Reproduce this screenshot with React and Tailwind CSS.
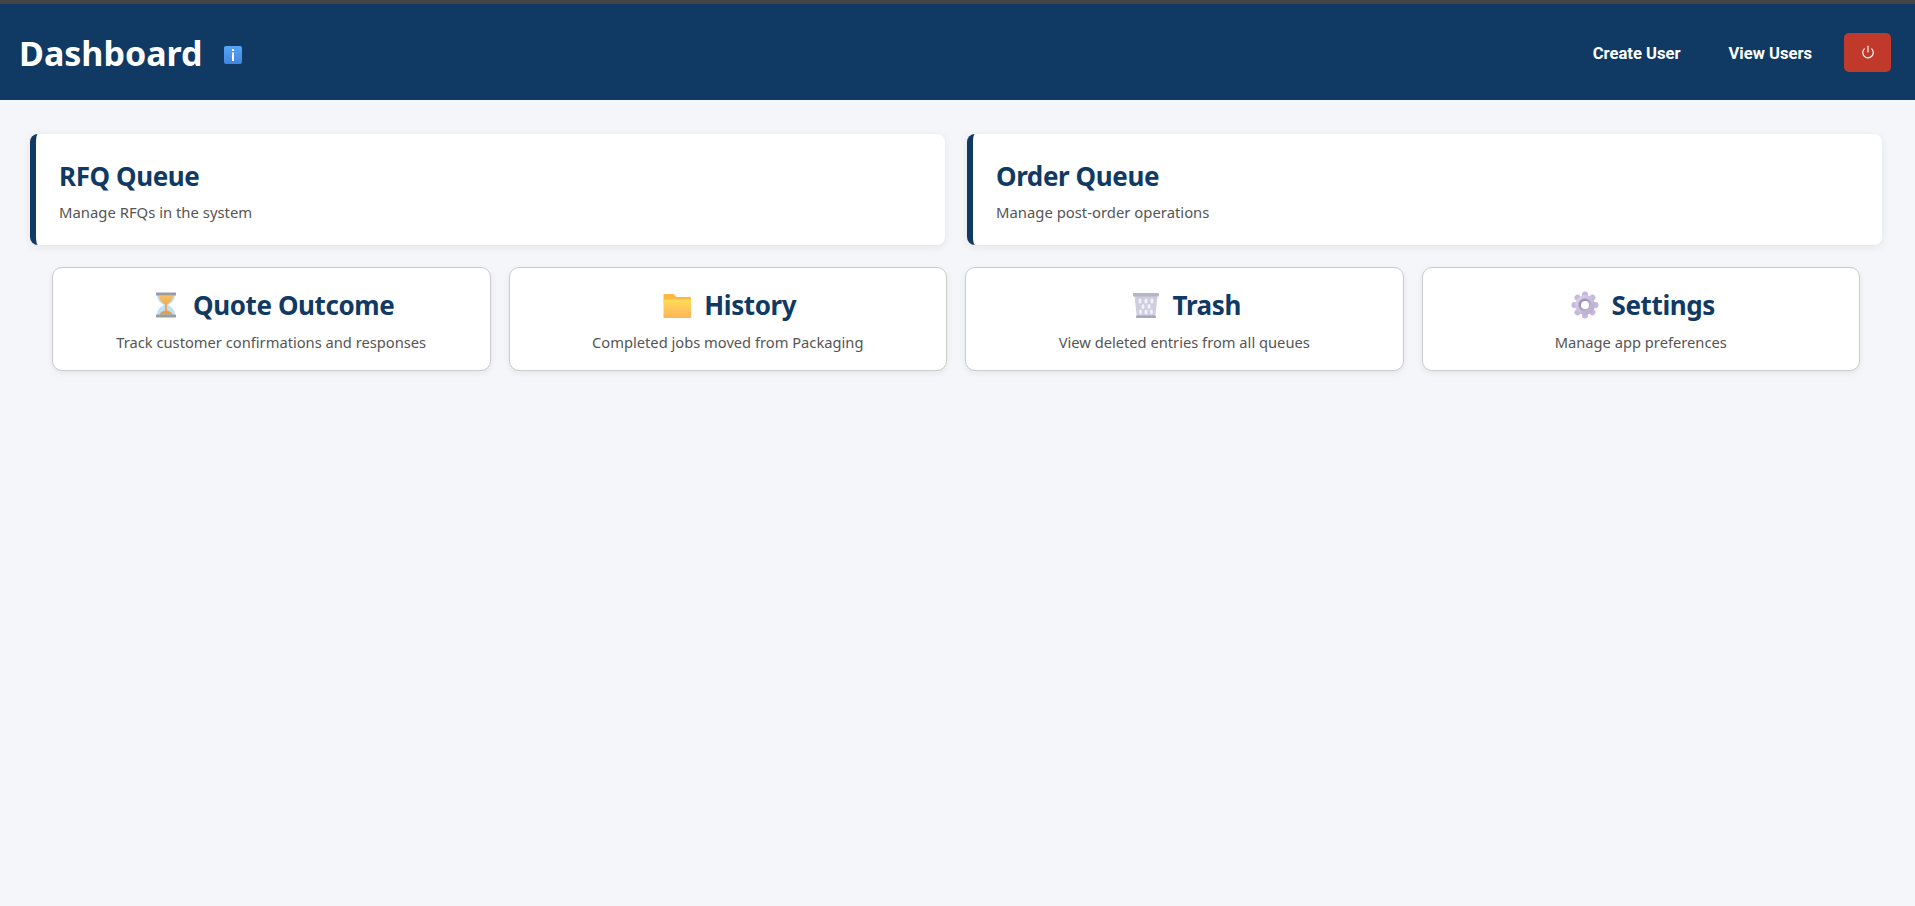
import React from 'react';
import { Power } from 'lucide-react';

function Hourglass() {
  return (
    <svg width="28" height="28" viewBox="0 0 28 28">
      <defs>
        <linearGradient id="hgSand" x1="0" y1="0" x2="0" y2="1">
          <stop offset="0" stopColor="#f6c063" />
          <stop offset="1" stopColor="#e29a45" />
        </linearGradient>
      </defs>
      <path d="M5 4h18c0 6-4 8-7 10 3 2 7 4 7 10H5c0-6 4-8 7-10-3-2-7-4-7-10z" fill="#bfe0f5" />
      <path d="M7 5h14c-.4 4.500-3.200 6.500-6 8.500v6c2.200.6 4.900 2 5.400 4H7.600c.5-2 3.200-3.400 5.400-4v-6C10.200 11.500 7.400 9.500 7 5z" fill="url(#hgSand)" />
      <rect x="4" y="1.500" width="20" height="3" rx="0.500" fill="#9b9ba3" />
      <rect x="4" y="23.500" width="20" height="3" rx="0.500" fill="#9b9ba3" />
    </svg>
  );
}

function Folder() {
  return (
    <svg width="28" height="28" viewBox="0 0 28 28">
      <defs>
        <linearGradient id="fldBody" x1="0" y1="0" x2="0" y2="1">
          <stop offset="0" stopColor="#ffdc55" />
          <stop offset="1" stopColor="#ffb45c" />
        </linearGradient>
      </defs>
      <path d="M0.500 4a1 1 0 0 1 1-1h8c1 0 1.500.5 2.200 1.200L13.500 6H27a1 1 0 0 1 1 1v5H0.500z" fill="#fdb93f" />
      <path d="M0.500 8.500h27.500v17.500a1 1 0 0 1-1 1H1.500a1 1 0 0 1-1-1z" fill="url(#fldBody)" />
    </svg>
  );
}

function Basket() {
  return (
    <svg width="28" height="28" viewBox="0 0 28 28">
      <path d="M2.500 5h23l-2.400 21.500H4.900z" fill="#cfcde0" />
      <g fill="#f4f3f9">
        <ellipse cx="8" cy="10" rx="1.500" ry="2.600" />
        <ellipse cx="14" cy="10" rx="1.500" ry="2.600" />
        <ellipse cx="20" cy="10" rx="1.500" ry="2.600" />
        <ellipse cx="11" cy="15.500" rx="1.500" ry="2.600" />
        <ellipse cx="17" cy="15.500" rx="1.500" ry="2.600" />
        <ellipse cx="8.500" cy="21" rx="1.400" ry="2.400" />
        <ellipse cx="14" cy="21" rx="1.500" ry="2.600" />
        <ellipse cx="19.500" cy="21" rx="1.400" ry="2.400" />
      </g>
      <rect x="1" y="2" width="26" height="3.500" rx="1" fill="#b6b4c6" />
      <rect x="4" y="24.500" width="20" height="2.500" rx="1" fill="#a9a6bd" />
    </svg>
  );
}

function Gear() {
  const angles = [0, 45, 90, 135, 180, 225, 270, 315];
  return (
    <svg width="28" height="28" viewBox="0 0 28 28">
      <defs>
        <linearGradient id="gearRing" x1="0" y1="0" x2="1" y2="1">
          <stop offset="0" stopColor="#e0d8ee" />
          <stop offset="1" stopColor="#b3a4cf" />
        </linearGradient>
        <linearGradient id="gearHole" x1="0" y1="0" x2="1" y2="1">
          <stop offset="0" stopColor="#8c84a8" />
          <stop offset="1" stopColor="#c7c0d8" />
        </linearGradient>
      </defs>
      {angles.map((a) => (
        <circle key={a} cx="14" cy="3.500" r="3" fill="#c5b8de" transform={`rotate(${a} 14 14)`} />
      ))}
      <circle cx="14" cy="14" r="10" fill="url(#gearRing)" />
      <circle cx="14" cy="14" r="6.500" fill="url(#gearHole)" />
      <circle cx="14" cy="14" r="4" fill="#ffffff" />
    </svg>
  );
}

function QueueCard({ title, text }) {
  return (
    <div className="h-[111px] bg-white rounded-lg border-l-[6px] border-[#103a63] pl-[23px] pt-[24px] shadow-[0_2px_8px_rgba(0,0,0,0.08)]">
      <h2 className="text-[26px] leading-[36px] font-bold text-[#103a63] tracking-[-0.4px]">{title}</h2>
      <p className="mt-[8px] text-[14.850px] leading-[20px] text-[#555555]">{text}</p>
    </div>
  );
}

function ToolCard({ icon, title, text }) {
  return (
    <div className="h-[104px] bg-white rounded-[10px] border border-[#cccccc] pt-[19px] flex flex-col items-center shadow-[0_2px_6px_rgba(0,0,0,0.07)]">
      <div className="flex items-center gap-[13px] h-[36px] pl-[4px]">
        {icon}
        <h3 className="text-[26px] leading-[36px] font-bold text-[#103a63] tracking-[-0.4px]">{title}</h3>
      </div>
      <p className="mt-[9px] text-[14.700px] leading-[20px] text-[#555555]">{text}</p>
    </div>
  );
}

export default function App() {
  return (
    <div className="min-h-[906px] bg-[#f5f6fa] font-['Noto_Sans',sans-serif]">
      <header className="h-[100px] border-t-4 border-[#454545] bg-[#103a63] flex items-center justify-between pl-[19px] pr-6">
        <div className="flex items-center pt-[2px]">
          <h1 className="text-[34px] leading-[48px] font-bold text-white">Dashboard</h1>
          <svg className="ml-[21px] mt-[4px]" width="18" height="18" viewBox="0 0 18 18">
            <defs>
              <linearGradient id="infoBg" x1="0" y1="0" x2="0" y2="1">
                <stop offset="0" stopColor="#58a5f5" />
                <stop offset="1" stopColor="#3f85e0" />
              </linearGradient>
            </defs>
            <rect width="18" height="18" rx="2" fill="url(#infoBg)" />
            <rect x="8" y="3" width="2" height="2" fill="#ffffff" />
            <rect x="8" y="6.500" width="2" height="8.500" fill="#ffffff" />
          </svg>
        </div>
        <nav className="flex items-center font-['Roboto',sans-serif] text-[16.600px] font-bold text-white">
          <span className="pt-[4px]">Create User</span>
          <span className="ml-[48px] pt-[4px]">View Users</span>
          <button className="ml-[32px] w-[47px] h-[39px] rounded-[5px] bg-[#c0392b] flex items-center justify-center text-white">
            <Power size={14} strokeWidth={2} />
          </button>
        </nav>
      </header>
      <main>
        <section className="grid grid-cols-2 gap-[22px] pl-[30px] pr-[33px] pt-[34px]">
          <QueueCard title="RFQ Queue" text="Manage RFQs in the system" />
          <QueueCard title="Order Queue" text="Manage post-order operations" />
        </section>
        <section className="grid grid-cols-4 gap-[18px] pl-[52px] pr-[55px] pt-[22px]">
          <ToolCard icon={<Hourglass />} title="Quote Outcome" text="Track customer confirmations and responses" />
          <ToolCard icon={<Folder />} title="History" text="Completed jobs moved from Packaging" />
          <ToolCard icon={<Basket />} title="Trash" text="View deleted entries from all queues" />
          <ToolCard icon={<Gear />} title="Settings" text="Manage app preferences" />
        </section>
      </main>
    </div>
  );
}
